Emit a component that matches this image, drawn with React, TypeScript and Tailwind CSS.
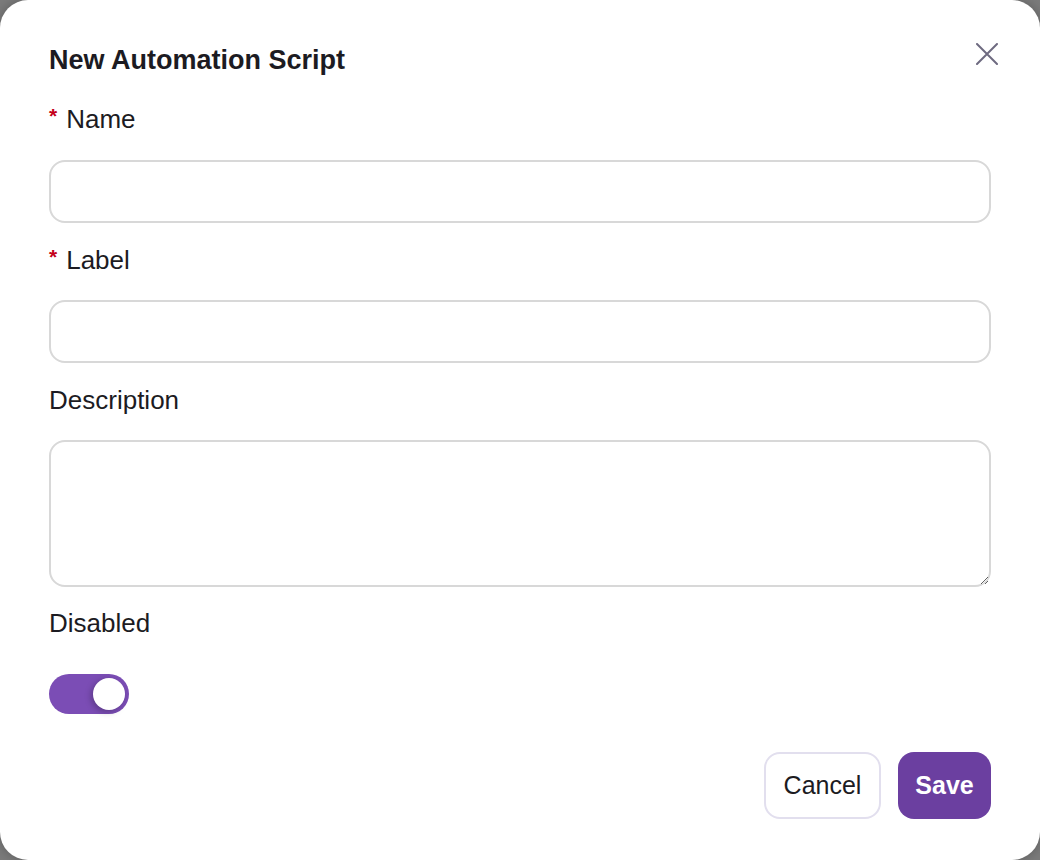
import React, { useState } from "react";

const font = { fontFamily: '"Liberation Sans", Arial, sans-serif' };

function Label({ text, required }: { text: string; required?: boolean }) {
  return (
    <div className="flex items-center h-8 text-[26px] leading-8 text-[#1c1b22]">
      {required && <span className="text-[#c4001a] text-[21px] font-bold mr-[9px] -mt-[6px]">*</span>}
      <span>{text}</span>
    </div>
  );
}

export default function App() {
  const [on, setOn] = useState(true);
  return (
    <div className="w-[1040px] h-[860px] bg-[#7b7b7b]" style={font}>
      <div className="relative w-full h-full bg-white rounded-[28px] shadow-[0_0_12px_rgba(0,0,0,0.25)] px-[49px] pt-[44px] flex flex-col">
        <button className="absolute right-[42px] top-[43px] w-[22px] h-[22px] text-[#6e6a80]" aria-label="Close">
          <svg viewBox="0 0 22 22" width="22" height="22" fill="none" stroke="currentColor" strokeWidth="2" strokeLinecap="round">
            <path d="M1 1L21 21M21 1L1 21" />
          </svg>
        </button>
        <h1 className="h-8 leading-8 text-[27px] font-bold text-[#1c1b22]">New Automation Script</h1>

        <div className="mt-[27px]">
          <Label text="Name" required />
          <input className="mt-[25px] block w-full h-[63px] rounded-[16px] border-2 border-[#d8d8d8] outline-none px-4 text-[22px]" />
        </div>

        <div className="mt-[21px]">
          <Label text="Label" required />
          <input className="mt-[24px] block w-full h-[63px] rounded-[16px] border-2 border-[#d8d8d8] outline-none px-4 text-[22px]" />
        </div>

        <div className="mt-[21px]">
          <Label text="Description" />
          <textarea className="mt-[24px] block w-full h-[147px] rounded-[16px] border-2 border-[#d8d8d8] outline-none px-4 py-3 text-[22px] resize-y" />
        </div>

        <div className="mt-[20px]">
          <Label text="Disabled" />
          <button
            onClick={() => setOn(!on)}
            className={`mt-[35px] relative block w-[80px] h-[40px] rounded-full ${on ? "bg-[#7b4db5]" : "bg-[#d4d4d8]"}`}
          >
            <span
              className={`absolute top-[4px] w-[32px] h-[32px] rounded-full bg-white shadow-[-2px_2px_6px_rgba(0,0,0,0.25)] ${on ? "right-[4px]" : "left-[4px]"}`}
            />
          </button>
        </div>

        <div className="mt-[38px] flex justify-end gap-[17px]">
          <button className="h-[67px] w-[117px] rounded-[16px] border-2 border-[#e2dfee] bg-white text-[25px] text-[#1c1b22]">
            Cancel
          </button>
          <button className="h-[67px] w-[93px] rounded-[16px] bg-[#6b3fa0] text-[25px] font-bold text-white">
            Save
          </button>
        </div>
      </div>
    </div>
  );
}
